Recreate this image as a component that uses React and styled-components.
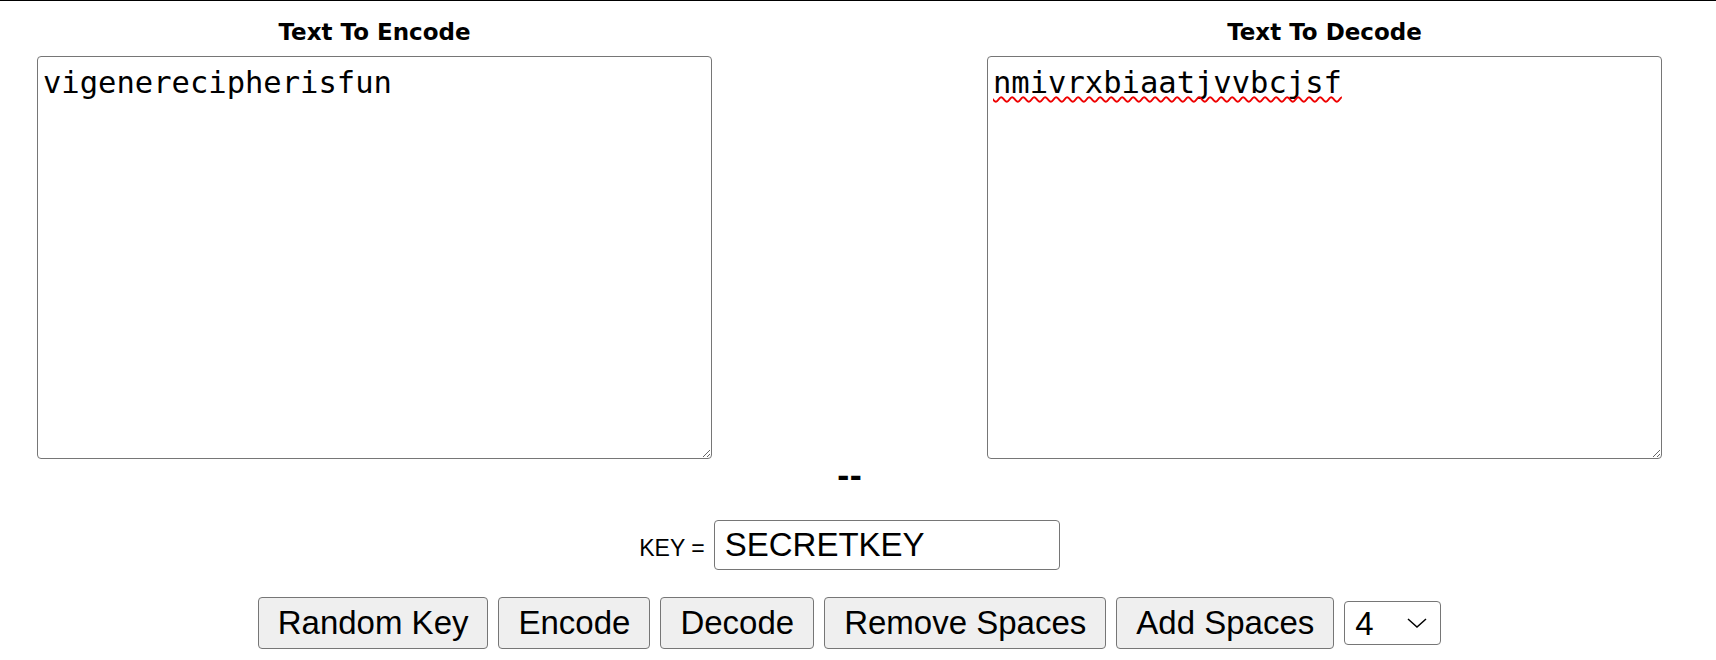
import React, { useState } from 'react';
import styled, { createGlobalStyle } from 'styled-components';

const GlobalStyle = createGlobalStyle`
  html,
  body {
    margin: 0;
    background: #fff;
    color: #000;
    font-family: 'Liberation Sans', Arial, sans-serif;
  }
`;

const StyledPage = styled.div`
  border-top: 1px solid #000;
  padding-right: 17px;
`;

const StyledEditors = styled.div`
  display: flex;
  justify-content: space-between;
  padding: 0 37px;
`;

const StyledColumn = styled.div`
  display: flex;
  flex-direction: column;
  align-items: center;
  width: 675px;
  padding-top: 18px;
`;

const StyledTitle = styled.h3`
  margin: 0 0 11px;
  font-family: 'DejaVu Sans', Verdana, sans-serif;
  font-size: 23px;
  font-weight: bold;
  line-height: 26px;
`;

const StyledField = styled.div`
  position: relative;
  width: 100%;
`;

const StyledTextArea = styled.textarea`
  display: block;
  box-sizing: border-box;
  width: 100%;
  height: 403px;
  margin: 0;
  padding: 8px 5px;
  border: 1px solid #767676;
  border-radius: 4px;
  background: #fff;
  color: #000;
  font-family: 'DejaVu Sans Mono', 'Liberation Mono', monospace;
  font-size: 30.5px;
  line-height: normal;
  outline: none;
`;

// red spell-check squiggle drawn over the decode box
const StyledSquiggle = styled.span`
  position: absolute;
  top: 9px;
  left: 6px;
  color: transparent;
  font-family: 'DejaVu Sans Mono', 'Liberation Mono', monospace;
  font-size: 30.5px;
  line-height: normal;
  text-decoration: underline wavy #e00;
  text-decoration-thickness: 2px;
  text-underline-offset: 3px;
  text-decoration-skip-ink: none;
  pointer-events: none;
  white-space: pre;
`;

const StyledDivider = styled.div`
  margin-top: 2px;
  font-family: 'DejaVu Sans', Verdana, sans-serif;
  font-size: 30px;
  font-weight: bold;
  line-height: 32px;
  text-align: center;
`;

const StyledKeyRow = styled.div`
  display: flex;
  justify-content: center;
  align-items: baseline;
  gap: 9px;
  margin-top: 27px;
`;

const StyledLabel = styled.label`
  font-size: 23px;
`;

const StyledInput = styled.input`
  box-sizing: border-box;
  width: 346px;
  height: 50px;
  margin: 0;
  padding: 0 10px;
  border: 1px solid #767676;
  border-radius: 4px;
  font-family: 'Liberation Sans', Arial, sans-serif;
  font-size: 33px;
  color: #000;
  outline: none;
`;

const StyledActions = styled.div`
  display: flex;
  justify-content: center;
  align-items: center;
  gap: 10px;
  margin-top: 27px;
`;

const StyledButton = styled.button`
  box-sizing: border-box;
  height: 52px;
  margin: 0;
  padding: 0 19px;
  border: 1px solid #767676;
  border-radius: 4px;
  background: #efefef;
  color: #000;
  font-family: 'Liberation Sans', Arial, sans-serif;
  font-size: 33px;
  cursor: pointer;
`;

const StyledSelectWrap = styled.div`
  position: relative;
`;

const StyledSelect = styled.select`
  appearance: none;
  box-sizing: border-box;
  width: 97px;
  height: 44px;
  margin: 0;
  padding: 0 0 0 10px;
  border: 1px solid #767676;
  border-radius: 4px;
  background: #fff;
  color: #000;
  font-family: 'Liberation Sans', Arial, sans-serif;
  font-size: 33px;
  outline: none;
`;

const StyledChevron = styled.svg`
  position: absolute;
  top: 17px;
  right: 14px;
  pointer-events: none;
`;

const decoded = 'nmivrxbiaatjvvbcjsf';

const App = () => {
  const [plain, setPlain] = useState('vigenerecipherisfun');
  const [cipher, setCipher] = useState(decoded);
  const [key, setKey] = useState('SECRETKEY');
  const [group, setGroup] = useState('4');

  return (
    <>
      <GlobalStyle />
      <StyledPage>
        <StyledEditors>
          <StyledColumn>
            <StyledTitle>Text To Encode</StyledTitle>
            <StyledField>
              <StyledTextArea
                spellCheck={false}
                value={plain}
                onChange={(e) => setPlain(e.target.value)}
              />
            </StyledField>
          </StyledColumn>
          <StyledColumn>
            <StyledTitle>Text To Decode</StyledTitle>
            <StyledField>
              <StyledTextArea
                spellCheck={false}
                value={cipher}
                onChange={(e) => setCipher(e.target.value)}
              />
              {cipher === decoded && <StyledSquiggle>{cipher}</StyledSquiggle>}
            </StyledField>
          </StyledColumn>
        </StyledEditors>
        <StyledDivider>--</StyledDivider>
        <StyledKeyRow>
          <StyledLabel htmlFor="key">KEY =</StyledLabel>
          <StyledInput
            id="key"
            value={key}
            onChange={(e) => setKey(e.target.value)}
          />
        </StyledKeyRow>
        <StyledActions>
          <StyledButton>Random Key</StyledButton>
          <StyledButton>Encode</StyledButton>
          <StyledButton>Decode</StyledButton>
          <StyledButton>Remove Spaces</StyledButton>
          <StyledButton>Add Spaces</StyledButton>
          <StyledSelectWrap>
            <StyledSelect value={group} onChange={(e) => setGroup(e.target.value)}>
              {[1, 2, 3, 4, 5, 6, 7, 8].map((n) => (
                <option key={n} value={n}>
                  {n}
                </option>
              ))}
            </StyledSelect>
            <StyledChevron width="20" height="10" viewBox="0 0 20 10">
              <path d="M1 1 L10 9 L19 1" fill="none" stroke="#000" strokeWidth="1.5" />
            </StyledChevron>
          </StyledSelectWrap>
        </StyledActions>
      </StyledPage>
    </>
  );
};

export default App;
